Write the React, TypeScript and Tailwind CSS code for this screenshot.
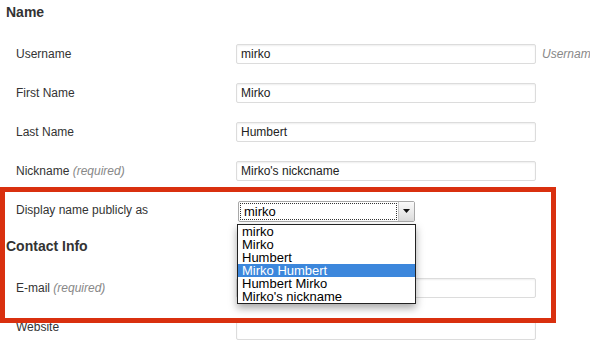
import React from "react";

const font = { fontFamily: '"Liberation Sans", Arial, Helvetica, sans-serif' };

function Input({ value }: { value?: string }) {
  return (
    <div className="shrink-0 w-[300px] h-[20px] border border-[#dcdcdc] rounded-[2px] bg-white shadow-[inset_0_1px_2px_rgba(0,0,0,0.07)] flex items-center px-[4px] text-[12px] text-[#222]">
      {value}
    </div>
  );
}

function Row({ label, req, children }: { label: string; req?: boolean; children?: React.ReactNode }) {
  return (
    <div className="h-[39px] flex items-center">
      <div className="shrink-0 w-[236px] pl-[16px] text-[12px] text-[#333]">
        {label}
        {req && <span className="italic text-[#888]"> (required)</span>}
      </div>
      {children}
    </div>
  );
}

export default function App() {
  const options = ["mirko", "Mirko", "Humbert", "Mirko Humbert", "Humbert Mirko", "Mirko's nickname"];
  return (
    <div className="relative w-[590px] h-[355px] overflow-hidden bg-white" style={font}>
      <div className="h-[34px] pt-[3px] pl-[6px] text-[14px] leading-[18px] font-bold text-[#333]">Name</div>
      <Row label="Username">
        <Input value="mirko" />
        <span className="shrink-0 ml-[6px] text-[12px] italic text-[#888] whitespace-nowrap">Usernames cannot be changed.</span>
      </Row>
      <Row label="First Name">
        <Input value="Mirko" />
      </Row>
      <Row label="Last Name">
        <Input value="Humbert" />
      </Row>
      <Row label="Nickname" req>
        <Input value="Mirko's nickcname" />
      </Row>
      <Row label="Display name publicly as">
        <div className="shrink-0 ml-[2px] mt-[3px] w-[177px] h-[21px] border border-[#a8a8a8] rounded-[2px] bg-white flex items-stretch">
          <div className="flex-1 m-[1px] border border-dotted border-[#333] flex items-center pl-[3px] text-[13px] text-black leading-none">mirko</div>
          <div className="w-[16px] bg-gradient-to-b from-[#fafafa] to-[#dcdcdc] border-l border-[#c8c8c8] flex items-center justify-center">
            <svg width="7" height="4" viewBox="0 0 7 4"><path d="M0 0h7L3.5 4z" fill="#111" /></svg>
          </div>
        </div>
      </Row>
      <div className="h-[39px] pt-[8px] pl-[6px] text-[14px] leading-[18px] font-bold text-[#333]">Contact Info</div>
      <Row label="E-mail" req>
        <Input />
      </Row>
      <Row label="Website">
        <div className="shrink-0 mt-[6px]">
          <Input />
        </div>
      </Row>

      <div className="absolute left-0 top-[187px] w-[556px] h-[136px] border-[5px] border-[#d9300f]" />

      <div className="absolute left-[237px] top-[224px] w-[179px] border border-[#222] bg-white shadow-[0_4px_8px_rgba(0,0,0,0.35)]">
        {options.map((o) => (
          <div
            key={o}
            className={
              "h-[13px] leading-[13px] pl-[4px] text-[13px] whitespace-nowrap " +
              (o === "Mirko Humbert" ? "bg-[#3c87dc] text-white" : "text-black")
            }
          >
            {o}
          </div>
        ))}
      </div>
    </div>
  );
}
